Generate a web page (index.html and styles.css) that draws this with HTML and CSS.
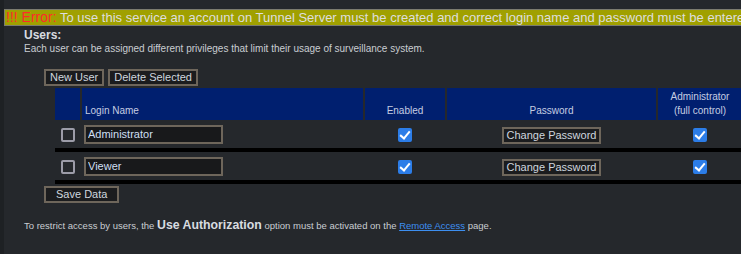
FILE: index.html
```html
<!doctype html>
<html lang="en">
  <head>
    <meta charset="UTF-8" />
    <title>Users</title>
    <link rel="stylesheet" href="styles.css">
  </head>
  <body>
    <div class="page">
      <div class="error">
        <span class="error-label">!!! Error:</span> To use this service an account on Tunnel Server must be created and correct login name and password must be entered
      </div>

      <div class="content">
        <h2>Users:</h2>
        <p class="desc">Each user can be assigned different privileges that limit their usage of surveillance system.</p>

        <div class="toolbar">
          <button class="btn">New User</button>
          <button class="btn">Delete Selected</button>
        </div>

        <table class="users">
          <colgroup>
            <col class="c-sel" />
            <col class="c-name" />
            <col class="c-en" />
            <col class="c-pw" />
            <col class="c-adm" />
          </colgroup>
          <thead>
            <tr>
              <th></th>
              <th class="left">Login Name</th>
              <th>Enabled</th>
              <th>Password</th>
              <th>Administrator<br />(full control)</th>
            </tr>
          </thead>
          <tbody>
            <tr>
              <td><input type="checkbox" /></td>
              <td class="left"><input type="text" class="name" value="Administrator" /></td>
              <td><input type="checkbox" checked /></td>
              <td><button class="btn btn-pw">Change Password</button></td>
              <td><input type="checkbox" checked /></td>
            </tr>
            <tr class="sep"><td colspan="5"></td></tr>
            <tr>
              <td><input type="checkbox" /></td>
              <td class="left"><input type="text" class="name" value="Viewer" /></td>
              <td><input type="checkbox" checked /></td>
              <td><button class="btn btn-pw">Change Password</button></td>
              <td><input type="checkbox" checked /></td>
            </tr>
            <tr class="sep"><td colspan="5"></td></tr>
          </tbody>
        </table>

        <div class="toolbar">
          <button class="btn btn-save">Save Data</button>
        </div>

        <p class="note">
          To restrict access by users, the <b>Use Authorization</b> option must be activated on the
          <a href="#">Remote Access</a> page.
        </p>
      </div>
    </div>
  </body>
</html>
```

FILE: styles.css
```css
* {
  box-sizing: border-box;
}

html,
body {
  margin: 0;
  padding: 0;
  overflow: hidden;
}

body {
  background: #1e2124;
  font-family: "Liberation Sans", Arial, sans-serif;
  color: #c9cdd2;
}

.page {
  margin-left: 4px;
  min-height: 100vh;
  background: #25282c;
  padding-top: 9px;
}

.error {
  border: 1px solid #7c7c70;
  background: #a0a000;
  color: #dedede;
  font-size: 13px;
  line-height: 15px;
  padding-left: 1px;
  white-space: nowrap;
  width: 900px;
}

.error-label {
  color: #ff2a2a;
  font-size: 14px;
}

.content {
  padding-left: 20px;
}

h2 {
  margin: 2px 0 0;
  font-size: 12px;
  font-weight: bold;
  color: #d8dce0;
}

.desc {
  margin: 1px 0 0;
  font-size: 10px;
}

.toolbar {
  margin-left: 20px;
  font-size: 0;
}

.content > .toolbar:first-of-type {
  margin-top: 15px;
}

.btn {
  font-family: "Liberation Sans", Arial, sans-serif;
  font-size: 11px;
  line-height: 13px;
  color: #cfd6de;
  background: #1b1c1e;
  border: 2px solid #6e665b;
  border-radius: 0;
  padding: 0 4px;
  margin: 0 4px 0 0;
}

.btn-pw {
  padding: 0 3px;
  margin: 0;
}

.btn-save {
  padding: 0 10px;
}

.users {
  border-collapse: separate;
  border-spacing: 2px;
  table-layout: fixed;
  width: 691px;
  margin-left: 29px;
}

.c-sel { width: 25px; }
.c-name { width: 281px; }
.c-en { width: 80px; }
.c-pw { width: 209px; }
.c-adm { width: 84px; }

.users th {
  background: #001f6f;
  color: #c5cde2;
  font-size: 10px;
  font-weight: normal;
  line-height: 14px;
  height: 32px;
  padding: 0 2px 2px;
  vertical-align: bottom;
  text-align: center;
}

.users td {
  height: 24px;
  padding: 0;
  text-align: center;
  vertical-align: middle;
}

.users .left {
  text-align: left;
  padding-left: 3px;
}

.users td.left {
  padding-left: 2px;
}

.users .sep td {
  height: 4px;
  background: #000;
}

.name {
  width: 139px;
  height: 19px;
  font-family: "Liberation Sans", Arial, sans-serif;
  font-size: 11px;
  color: #cfdff2;
  background: #18191b;
  border: 2px solid #6e665b;
  padding: 0 2px;
  margin: 0;
  vertical-align: middle;
}

input[type="checkbox"] {
  appearance: none;
  position: relative;
  width: 14px;
  height: 14px;
  margin: 0;
  border: 2px solid #9c9ca8;
  border-radius: 2px;
  background: #25282c;
  vertical-align: middle;
}

input[type="checkbox"]:checked {
  background: #2c7de8;
  border-color: #2c7de8;
}

input[type="checkbox"]:checked::before {
  content: "";
  position: absolute;
  left: 2px;
  top: -1px;
  width: 4px;
  height: 8px;
  border: solid #fff;
  border-width: 0 2px 2px 0;
  transform: rotate(40deg);
}

.note {
  margin: 15px 0 0;
  font-size: 9.5px;
}

.note b {
  font-size: 12.3px;
  color: #d8dce0;
}

.note a {
  color: #3d8ff0;
}
```
